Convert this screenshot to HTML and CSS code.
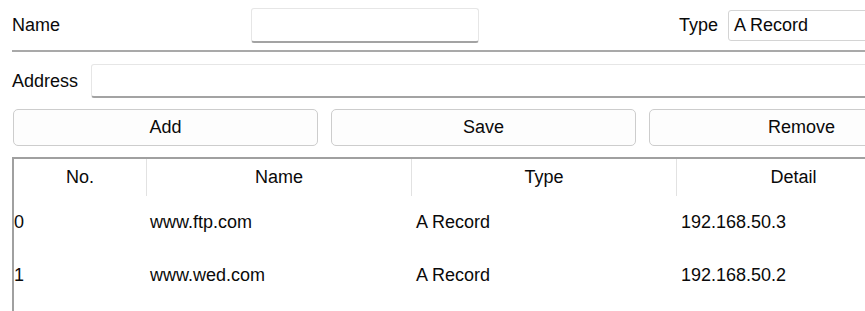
FILE: index.html
```html
<!DOCTYPE html>
<html>
<head>
<meta charset="utf-8">
<link rel="stylesheet" href="styles.css">
</head>
<body>
<div class="app">
  <div class="row-top">
    <label class="lbl lbl-name">Name</label>
    <div class="field field-name"></div>
    <label class="lbl lbl-type">Type</label>
    <div class="select">A Record</div>
  </div>
  <div class="row-addr">
    <label class="lbl lbl-addr">Address</label>
    <div class="field field-addr"></div>
  </div>
  <div class="buttons">
    <button class="btn">Add</button>
    <button class="btn">Save</button>
    <button class="btn">Remove</button>
  </div>
  <div class="table">
    <div class="thead">
      <div class="th">No.</div>
      <div class="th sep">Name</div>
      <div class="th sep">Type</div>
      <div class="th sep">Detail</div>
    </div>
    <div class="tr">
      <div class="td first">0</div>
      <div class="td second">www.ftp.com</div>
      <div class="td">A Record</div>
      <div class="td">192.168.50.3</div>
    </div>
    <div class="tr">
      <div class="td first">1</div>
      <div class="td second">www.wed.com</div>
      <div class="td">A Record</div>
      <div class="td">192.168.50.2</div>
    </div>
  </div>
</div>
</body>
</html>
```
FILE: styles.css
```css
html, body {
  margin: 0;
  padding: 0;
  background: #ffffff;
}
body {
  width: 865px;
  height: 311px;
  overflow: hidden;
  font-family: "Liberation Sans", Arial, sans-serif;
  font-size: 18px;
  color: #0a0a0a;
}
.app {
  width: 942px;
  padding-left: 12px;
  box-sizing: content-box;
}
.row-top {
  display: flex;
  align-items: center;
  height: 50px;
  border-bottom: 2px solid #a9a9a9;
}
.lbl-name {
  width: 239px;
  flex: none;
}
.field {
  box-sizing: border-box;
  background: #fff;
  border: 1px solid #e6e6e6;
  border-bottom: 2px solid #a3a3a3;
  border-radius: 3px;
}
.field-name {
  width: 228px;
  height: 35px;
  flex: none;
}
.lbl-type {
  margin-left: 200px;
  width: 49px;
  flex: none;
}
.select {
  flex: 1;
  box-sizing: border-box;
  height: 31px;
  border: 1px solid #d4d4d4;
  border-radius: 3px;
  padding-left: 5px;
  line-height: 29px;
}
.row-addr {
  display: flex;
  align-items: center;
  padding-top: 12px;
}
.lbl-addr {
  width: 79px;
  flex: none;
}
.field-addr {
  flex: 1;
  height: 34px;
}
.buttons {
  display: flex;
  gap: 13px;
  margin-top: 11px;
  margin-left: 1px;
}
.btn {
  flex: 1;
  height: 37px;
  box-sizing: border-box;
  border: 1px solid #cdcdcd;
  border-radius: 5px;
  background: #fdfdfd;
  font-family: "Liberation Sans", Arial, sans-serif;
  font-size: 18px;
  color: #0a0a0a;
  padding: 0;
}
.table {
  margin-top: 11px;
  border-top: 2px solid #a0a0a0;
  border-left: 2px solid #a0a0a0;
  height: 160px;
}
.thead, .tr {
  display: grid;
  grid-template-columns: 132px 265px 265px 234px;
}
.th {
  height: 37px;
  line-height: 37px;
  text-align: center;
}
.th.sep {
  border-left: 1px solid #e2e2e2;
}
.tr {
  height: 53px;
}
.td {
  line-height: 53px;
  padding-left: 4px;
  border-left: 1px solid transparent;
}
.td.second {
  padding-left: 3px;
}
.td.first {
  padding-left: 0;
  border-left: none;
}
```
